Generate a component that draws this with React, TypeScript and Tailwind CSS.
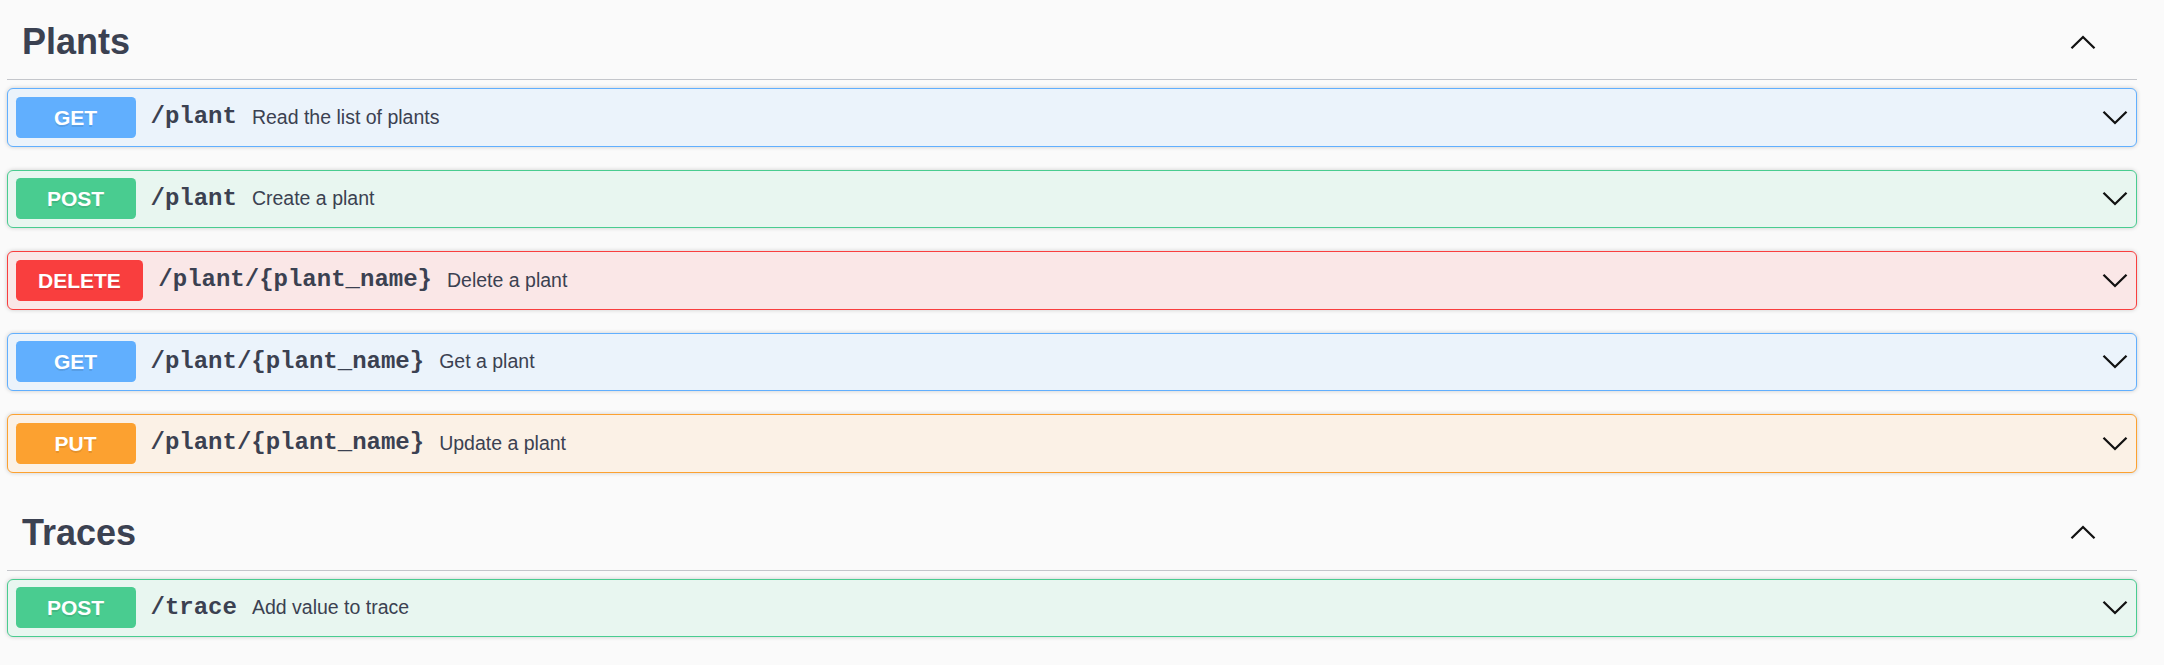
import React from "react";

type Method = "GET" | "POST" | "DELETE" | "PUT";

const styles: Record<Method, { row: string; badge: string }> = {
  GET: { row: "bg-[#ebf3fb] border-[#61affe]", badge: "bg-[#61affe]" },
  POST: { row: "bg-[#e8f6f0] border-[#49cc90]", badge: "bg-[#49cc90]" },
  DELETE: { row: "bg-[#fae7e7] border-[#f93e3e]", badge: "bg-[#f93e3e]" },
  PUT: { row: "bg-[#fbf1e6] border-[#fca130]", badge: "bg-[#fca130]" },
};

type Op = { method: Method; path: string; desc: string };

const sections: { name: string; ops: Op[] }[] = [
  {
    name: "Plants",
    ops: [
      { method: "GET", path: "/plant", desc: "Read the list of plants" },
      { method: "POST", path: "/plant", desc: "Create a plant" },
      { method: "DELETE", path: "/plant/{plant_name}", desc: "Delete a plant" },
      { method: "GET", path: "/plant/{plant_name}", desc: "Get a plant" },
      { method: "PUT", path: "/plant/{plant_name}", desc: "Update a plant" },
    ],
  },
  {
    name: "Traces",
    ops: [{ method: "POST", path: "/trace", desc: "Add value to trace" }],
  },
];

function ChevronDown() {
  return (
    <svg width="26" height="15" viewBox="0 0 26 15" fill="none">
      <polyline points="1.5,1.8 13,13 24.5,1.8" stroke="#111" strokeWidth="2.3" />
    </svg>
  );
}

function ChevronUp() {
  return (
    <svg width="26" height="15" viewBox="0 0 26 15" fill="none">
      <polyline points="1.5,13.2 13,2 24.5,13.2" stroke="#111" strokeWidth="2.3" />
    </svg>
  );
}

function Row({ op }: { op: Op }) {
  const s = styles[op.method];
  return (
    <div
      className={`mb-[23px] flex h-[58.5px] items-center rounded-[6px] border-[1.5px] pl-[7.5px] pr-[8.5px] shadow-[0_0_4.5px_rgba(0,0,0,0.19)] ${s.row}`}
    >
      <div
        className={`flex h-[41px] min-w-[120px] items-center justify-center rounded-[4.5px] px-[22.5px] font-['Liberation_Sans',Arial,sans-serif] text-[21px] font-bold text-white [text-shadow:0_1.5px_0_rgba(0,0,0,0.1)] ${s.badge}`}
      >
        {op.method}
      </div>
      <span className="px-[15px] font-['Liberation_Mono','Courier_New',monospace] text-[24px] font-bold text-[#3b4151]">
        {op.path}
      </span>
      <span className="flex-1 font-['Liberation_Sans',Arial,sans-serif] text-[19.5px] text-[#3b4151]">
        {op.desc}
      </span>
      <ChevronDown />
    </div>
  );
}

export default function App() {
  return (
    <div className="min-h-screen bg-[#fafafa] pl-[7px] pr-[27px] pt-[5px]">
      {sections.map((sec) => (
        <div key={sec.name}>
          <div className="mb-[8px] flex h-[75px] items-center justify-between border-b-[1.5px] border-[#c4c6cb] pl-[15px] pr-[41px]">
            <h3 className="font-['Liberation_Sans',Arial,sans-serif] text-[36px] font-bold text-[#3b4151]">
              {sec.name}
            </h3>
            <ChevronUp />
          </div>
          {sec.ops.map((op, i) => (
            <Row key={i} op={op} />
          ))}
        </div>
      ))}
    </div>
  );
}
